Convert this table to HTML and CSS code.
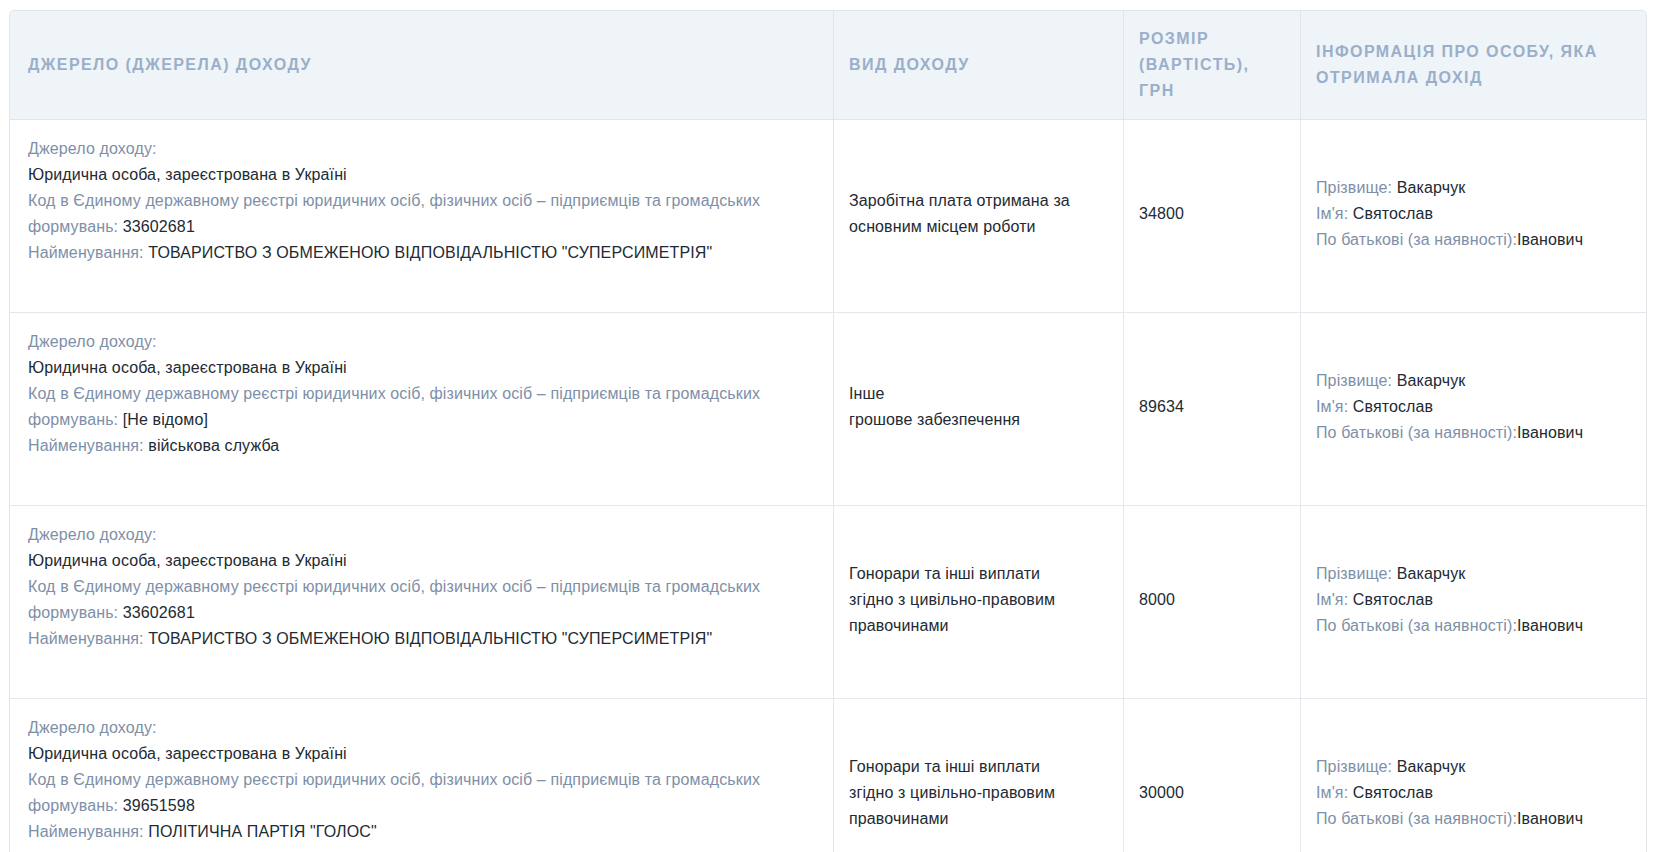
FILE: index.html
```html
<!DOCTYPE html>
<html lang="uk">
<head>
<meta charset="utf-8">
<title>Доходи</title>
<link rel="stylesheet" href="styles.css">
</head>
<body>
<div class="table">
  <div class="th c1">Джерело (джерела) доходу</div>
  <div class="th">Вид доходу</div>
  <div class="th">Розмір (вартість), грн</div>
  <div class="th">Інформація про особу, яка отримала дохід</div>

  <div class="td c1"><div class="src">
    <span class="lbl">Джерело доходу:</span><br>
    <span class="val">Юридична особа, зареєстрована в Україні</span><br>
    <span class="lbl">Код в Єдиному державному реєстрі юридичних осіб, фізичних осіб – підприємців та громадських формувань: </span><span class="val">33602681</span><br>
    <span class="lbl">Найменування: </span><span class="val">ТОВАРИСТВО З ОБМЕЖЕНОЮ ВІДПОВІДАЛЬНІСТЮ "СУПЕРСИМЕТРІЯ"</span>
  </div></div>
  <div class="td mid"><div class="val">Заробітна плата отримана за основним місцем роботи</div></div>
  <div class="td mid"><div class="val">34800</div></div>
  <div class="td mid"><div><span class="lbl">Прізвище: </span><span class="val">Вакарчук</span><br><span class="lbl">Ім'я: </span><span class="val">Святослав</span><br><span class="lbl">По батькові (за наявності):</span><span class="val">Іванович</span></div></div>

  <div class="td c1"><div class="src">
    <span class="lbl">Джерело доходу:</span><br>
    <span class="val">Юридична особа, зареєстрована в Україні</span><br>
    <span class="lbl">Код в Єдиному державному реєстрі юридичних осіб, фізичних осіб – підприємців та громадських формувань: </span><span class="val">[Не відомо]</span><br>
    <span class="lbl">Найменування: </span><span class="val">військова служба</span>
  </div></div>
  <div class="td mid"><div class="val">Інше<br>грошове забезпечення</div></div>
  <div class="td mid"><div class="val">89634</div></div>
  <div class="td mid"><div><span class="lbl">Прізвище: </span><span class="val">Вакарчук</span><br><span class="lbl">Ім'я: </span><span class="val">Святослав</span><br><span class="lbl">По батькові (за наявності):</span><span class="val">Іванович</span></div></div>

  <div class="td c1"><div class="src">
    <span class="lbl">Джерело доходу:</span><br>
    <span class="val">Юридична особа, зареєстрована в Україні</span><br>
    <span class="lbl">Код в Єдиному державному реєстрі юридичних осіб, фізичних осіб – підприємців та громадських формувань: </span><span class="val">33602681</span><br>
    <span class="lbl">Найменування: </span><span class="val">ТОВАРИСТВО З ОБМЕЖЕНОЮ ВІДПОВІДАЛЬНІСТЮ "СУПЕРСИМЕТРІЯ"</span>
  </div></div>
  <div class="td mid"><div class="val">Гонорари та інші виплати<br>згідно з цивільно-правовим правочинами</div></div>
  <div class="td mid"><div class="val">8000</div></div>
  <div class="td mid"><div><span class="lbl">Прізвище: </span><span class="val">Вакарчук</span><br><span class="lbl">Ім'я: </span><span class="val">Святослав</span><br><span class="lbl">По батькові (за наявності):</span><span class="val">Іванович</span></div></div>

  <div class="td c1"><div class="src">
    <span class="lbl">Джерело доходу:</span><br>
    <span class="val">Юридична особа, зареєстрована в Україні</span><br>
    <span class="lbl">Код в Єдиному державному реєстрі юридичних осіб, фізичних осіб – підприємців та громадських формувань: </span><span class="val">39651598</span><br>
    <span class="lbl">Найменування: </span><span class="val">ПОЛІТИЧНА ПАРТІЯ "ГОЛОС"</span>
  </div></div>
  <div class="td mid"><div class="val">Гонорари та інші виплати<br>згідно з цивільно-правовим правочинами</div></div>
  <div class="td mid"><div class="val">30000</div></div>
  <div class="td mid"><div><span class="lbl">Прізвище: </span><span class="val">Вакарчук</span><br><span class="lbl">Ім'я: </span><span class="val">Святослав</span><br><span class="lbl">По батькові (за наявності):</span><span class="val">Іванович</span></div></div>
</div>
</body>
</html>
```

FILE: styles.css
```css
html, body {
  margin: 0;
  padding: 0;
  background: #ffffff;
}

body {
  font-family: "Liberation Sans", Arial, sans-serif;
  font-size: 16px;
  line-height: 26px;
  letter-spacing: 0.12px;
}

.table {
  margin: 10px 9px 0;
  border: 1px solid #e1e5ea;
  border-radius: 5px;
  overflow: hidden;
  display: grid;
  grid-template-columns: 823px 290px 177px 346px;
}

.th {
  background: #eff4f9;
  color: #9aafca;
  font-weight: bold;
  font-size: 16px;
  letter-spacing: 1.45px;
  text-transform: uppercase;
  padding: 15px 16px 15px 15px;
  border-bottom: 1px solid #e1e5ea;
  border-left: 1px solid #e1e5ea;
  display: flex;
  align-items: center;
  box-sizing: border-box;
}

.td {
  border-bottom: 1px solid #e4e7eb;
  border-left: 1px solid #e4e7eb;
  padding: 14px 16px 18px 15px;
  box-sizing: border-box;
}

.th.c1, .td.c1 {
  border-left: none;
  padding-left: 18px;
}

.td.c1 {
  padding-top: 16px;
  padding-bottom: 16px;
}

.src {
  margin-bottom: 30px;
}

.mid {
  display: flex;
  align-items: center;
}

.lbl {
  color: #7e8fa8;
}

.val {
  color: #222a33;
}
```
